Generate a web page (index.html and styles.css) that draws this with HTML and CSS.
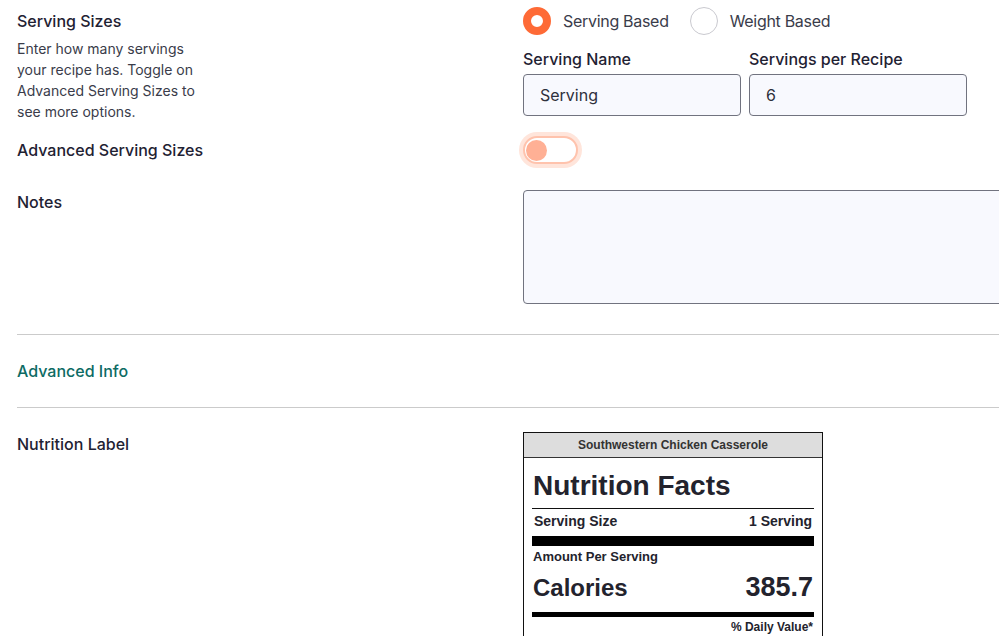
FILE: index.html
```html
<!DOCTYPE html>
<html lang="en">
<head>
<meta charset="utf-8">
<title>Recipe settings</title>
<link rel="stylesheet" href="styles.css">
</head>
<body>
<main class="page">
  <section class="row row-serving">
    <div class="info">
      <h3 class="title">Serving Sizes</h3>
      <p class="desc">Enter how many servings your recipe has. Toggle on Advanced Serving Sizes to see more options.</p>
    </div>
    <div class="control">
      <div class="radios">
        <label class="radio"><span class="dot dot-on"></span><span class="radio-text">Serving Based</span></label>
        <label class="radio"><span class="dot"></span><span class="radio-text">Weight Based</span></label>
      </div>
      <div class="fields">
        <div class="field">
          <div class="field-label">Serving Name</div>
          <div class="input">Serving</div>
        </div>
        <div class="field">
          <div class="field-label">Servings per Recipe</div>
          <div class="input">6</div>
        </div>
      </div>
    </div>
  </section>

  <section class="row row-toggle">
    <h3 class="title">Advanced Serving Sizes</h3>
    <div class="control">
      <div class="toggle"><span class="knob"></span></div>
    </div>
  </section>

  <section class="row row-notes">
    <h3 class="title">Notes</h3>
    <div class="control">
      <div class="textarea"></div>
    </div>
  </section>

  <div class="divider divider-first"></div>
  <h3 class="section-link">Advanced Info</h3>
  <div class="divider"></div>

  <section class="row row-label">
    <h3 class="title">Nutrition Label</h3>
    <div class="control">
      <div class="nl">
        <div class="nl-head">Southwestern Chicken Casserole</div>
        <div class="nl-body">
          <div class="nl-title">Nutrition Facts</div>
          <div class="nl-row nl-size"><span>Serving Size</span><span>1 Serving</span></div>
          <div class="nl-bar-thick"></div>
          <div class="nl-amount">Amount Per Serving</div>
          <div class="nl-row nl-cal"><span class="cal-name">Calories</span><span class="cal-val">385.7</span></div>
          <div class="nl-bar-mid"></div>
          <div class="nl-dv">% Daily Value*</div>
        </div>
      </div>
    </div>
  </section>
</main>
</body>
</html>
```

FILE: styles.css
```css
html, body {
  margin: 0;
  padding: 0;
  overflow: hidden;
  background: #ffffff;
}

body {
  font-family: Inter, "Noto Sans", "Liberation Sans", sans-serif;
  color: #1f2233;
  width: 999px;
  height: 636px;
}

.page {
  padding: 7px 0 0 17px;
}

.row {
  display: grid;
  grid-template-columns: 506px 560px;
}

.title {
  margin: 0;
  font-size: 16px;
  line-height: 24px;
  font-weight: 500;
  color: #1f2233;
}

.row-serving .title {
  margin-top: 2px;
}

.desc {
  margin: 5px 0 0;
  width: 182px;
  font-size: 14px;
  line-height: 21px;
  color: #3a3c4a;
}

/* radios */
.radios {
  display: flex;
  gap: 21px;
  height: 28px;
  align-items: center;
}

.radio {
  display: flex;
  align-items: center;
  gap: 12px;
  font-size: 16px;
  letter-spacing: -0.3px;
  color: #3a3c4a;
}

.dot {
  box-sizing: border-box;
  width: 28px;
  height: 28px;
  border-radius: 50%;
  border: 1px solid #c9c9cf;
  background: #fff;
}

.dot-on {
  border: 8px solid #fe6a36;
}

.fields {
  display: flex;
  gap: 8px;
  margin-top: 12px;
}

.field {
  width: 218px;
}

.field-label {
  font-size: 16px;
  line-height: 24px;
  font-weight: 500;
  color: #1f2233;
}

.input {
  box-sizing: border-box;
  margin-top: 3px;
  height: 42px;
  border: 1px solid #71737f;
  border-radius: 4px;
  background: #f8f9fe;
  padding: 0 16px;
  font-size: 16px;
  line-height: 40px;
  color: #2e303c;
}

/* toggle */
.row-toggle {
  margin-top: 14px;
  align-items: center;
}

.toggle {
  box-sizing: border-box;
  width: 55px;
  height: 28px;
  border: 2px solid #ffc3ad;
  border-radius: 14px;
  background: #fff;
  box-shadow: 0 0 0 4px #ffe5db;
  display: flex;
  align-items: center;
  padding-left: 1px;
}

.knob {
  width: 21px;
  height: 21px;
  border-radius: 50%;
  background: #ffb095;
}

/* notes */
.row-notes {
  margin-top: 26px;
  align-items: start;
}

.textarea {
  box-sizing: border-box;
  width: 560px;
  height: 114px;
  border: 1px solid #71737f;
  border-radius: 4px;
  background: #f8f9fe;
}

.divider {
  height: 0;
  border-top: 1px solid #cbcbcb;
}

.divider-first {
  margin-top: 30px;
}

.section-link {
  margin: 0;
  padding: 24px 0;
  font-size: 16px;
  line-height: 24px;
  font-weight: 500;
  color: #0d6b64;
}

.row-label {
  margin-top: 24px;
  align-items: start;
}

/* nutrition label */
.nl {
  box-sizing: border-box;
  width: 300px;
  border: 1px solid #111;
  font-family: "Liberation Sans", Arial, sans-serif;
  color: #23232d;
  font-weight: 700;
}

.nl-head {
  height: 24px;
  line-height: 24px;
  background: #dddddd;
  border-bottom: 1px solid #333;
  text-align: center;
  font-size: 12px;
  color: #333;
}

.nl-body {
  padding: 0 8px 12px;
}

.nl-title {
  margin-top: 12px;
  font-size: 28px;
  line-height: 32px;
  padding-bottom: 6px;
  border-bottom: 1px solid #111;
  padding-left: 1px;
}

.nl-row {
  display: flex;
  justify-content: space-between;
  align-items: baseline;
}

.nl-size {
  padding: 4px 2px 0;
  font-size: 14px;
  line-height: 16px;
}

.nl-bar-thick {
  margin-top: 7px;
  height: 10px;
  background: #000;
}

.nl-amount {
  margin-top: 3px;
  font-size: 13px;
  line-height: 15px;
  padding-left: 1px;
}

.nl-cal {
  margin-top: 8px;
  padding: 0 1px;
  line-height: 30px;
}

.cal-name {
  font-size: 24px;
}

.cal-val {
  font-size: 27px;
}

.nl-bar-mid {
  margin-top: 9px;
  height: 5px;
  background: #000;
}

.nl-dv {
  margin-top: 3px;
  text-align: right;
  font-size: 12px;
  line-height: 14px;
  padding-right: 1px;
}
```
